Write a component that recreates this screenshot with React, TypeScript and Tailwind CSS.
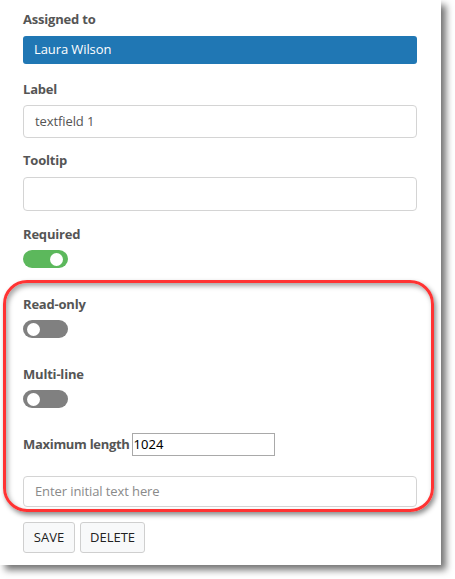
import React from "react";

function Toggle({ on }: { on: boolean }) {
  return (
    <div
      className={`relative h-[18px] w-[45px] rounded-full ${on ? "bg-[#5cb85c]" : "bg-[#808080]"}`}
    >
      <div
        className={`absolute top-[2.5px] h-[13px] w-[13px] rounded-full bg-white ${on ? "left-[27px]" : "left-[4px]"}`}
      />
    </div>
  );
}

function Label({ children, className = "" }: { children: React.ReactNode; className?: string }) {
  return (
    <div className={`h-5 text-[13px] font-bold leading-5 tracking-[-0.2px] text-[#555] ${className}`}>
      {children}
    </div>
  );
}

export default function App() {
  return (
    <div
      className="relative h-[579px] w-[455px] bg-white"
      style={{ fontFamily: '"Open Sans", "Noto Sans", sans-serif' }}
    >
      <div className="flex h-[565px] w-[441px] flex-col bg-white pl-[23px] pr-[24px] pt-[9px] shadow-[5px_5px_7px_rgba(0,0,0,0.55)]">
        <Label>Assigned to</Label>
        <div className="mt-[7px] flex h-[28px] items-center rounded-[3px] bg-[#2077b4] pl-[11px] text-[13px] tracking-[-0.1px] text-white">
          Laura Wilson
        </div>

        <Label className="mt-[15px]">Label</Label>
        <div className="mt-[6px] flex h-[33px] items-center rounded-[4px] border border-[#d4d4d4] pl-[11px] text-[13px] tracking-[-0.1px] text-[#555]">
          textfield 1
        </div>

        <Label className="mt-[12px]">Tooltip</Label>
        <div className="mt-[7px] h-[34px] rounded-[4px] border border-[#d4d4d4]" />

        <Label className="mt-[13px]">Required</Label>
        <div className="mt-[6px]">
          <Toggle on />
        </div>

        <Label className="mt-[26px]">Read-only</Label>
        <div className="mt-[6px]">
          <Toggle on={false} />
        </div>

        <Label className="mt-[26px]">Multi-line</Label>
        <div className="mt-[6px]">
          <Toggle on={false} />
        </div>

        <div className="mt-[25px] flex h-[23px] items-center">
          <span className="text-[13px] font-bold tracking-[-0.3px] text-[#555]">Maximum length</span>
          <div
            className="ml-[2px] flex h-[23px] w-[143px] items-center border border-[#a9a9a9] pl-[1px] text-[13px] text-black"
            style={{ fontFamily: '"Noto Sans", sans-serif' }}
          >
            1024
          </div>
        </div>

        <div className="mt-[20px] flex h-[31px] items-center rounded-[4px] border border-[#d4d4d4] pl-[11px] text-[13px] tracking-[-0.1px] text-[#8a8a8a]">
          Enter initial text here
        </div>

        <div className="mt-[15px] flex gap-[5px]">
          <div className="flex h-[31px] w-[52px] items-center justify-center rounded-[3px] border border-[#cfcfcf] bg-[#f8f9fa] text-[13px] text-[#222]">
            SAVE
          </div>
          <div className="flex h-[31px] w-[65px] items-center justify-center rounded-[3px] border border-[#cfcfcf] bg-[#f8f9fa] text-[13px] text-[#222]">
            DELETE
          </div>
        </div>
      </div>

      <div className="pointer-events-none absolute left-[3px] top-[280px] h-[232px] w-[431px] rounded-[24px] border-[3px] border-[#ff3333] shadow-[2px_3px_5px_rgba(0,0,0,0.45),inset_2px_3px_5px_rgba(0,0,0,0.35)]" />
    </div>
  );
}
